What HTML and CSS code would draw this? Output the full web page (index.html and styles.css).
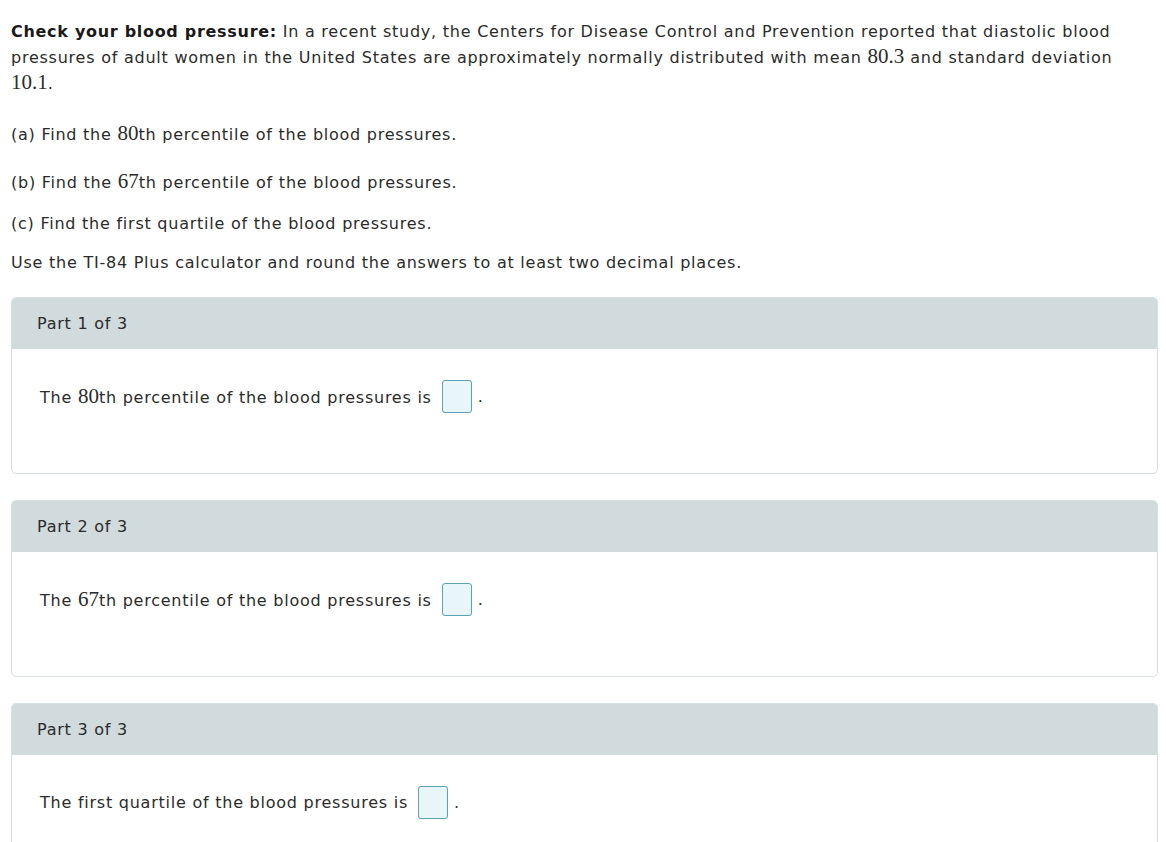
FILE: index.html
```html
<!DOCTYPE html>
<html>
<head>
<meta charset="utf-8">
<link rel="stylesheet" href="styles.css">
</head>
<body>
<div class="page">
  <p class="intro"><b>Check your blood pressure:</b> In a recent study, the Centers for Disease Control and Prevention reported that diastolic blood pressures of adult women in the United States are approximately normally distributed with mean <span class="m">80.3</span> and standard deviation <span class="m">10.1</span>.</p>
  <p class="q mline qa">(a) Find the <span class="m">80</span>th percentile of the blood pressures.</p>
  <p class="q mline">(b) Find the <span class="m">67</span>th percentile of the blood pressures.</p>
  <p class="q">(c) Find the first quartile of the blood pressures.</p>
  <p class="q">Use the TI-84 Plus calculator and round the answers to at least two decimal places.</p>

  <div class="panel">
    <div class="panel-head">Part 1 of 3</div>
    <div class="panel-body">
      <span>The <span class="m">80</span>th percentile of the blood pressures is</span><span class="box"></span><span>.</span>
    </div>
  </div>
  <div class="panel">
    <div class="panel-head">Part 2 of 3</div>
    <div class="panel-body">
      <span>The <span class="m">67</span>th percentile of the blood pressures is</span><span class="box"></span><span>.</span>
    </div>
  </div>
  <div class="panel">
    <div class="panel-head">Part 3 of 3</div>
    <div class="panel-body">
      <span>The first quartile of the blood pressures is</span><span class="box"></span><span>.</span>
    </div>
  </div>
</div>
</body>
</html>
```
FILE: styles.css
```css
html, body {
  margin: 0;
  padding: 0;
  background: #fff;
}
.page {
  padding: 19px 8px 0 11px;
  font-family: "DejaVu Sans", Verdana, sans-serif;
  font-size: 16px;
  letter-spacing: 0.76px;
  color: #2b2b2b;
}
p {
  margin: 0;
}
.intro {
  line-height: 26px;
  padding-right: 36px;
}
.intro b {
  color: #1a1a1a;
  letter-spacing: 0.7px;
}
.m {
  font-family: "Liberation Serif", "Times New Roman", serif;
  font-size: 21px;
  line-height: 1;
  letter-spacing: 0;
}
.q {
  line-height: 26px;
  margin-top: 13px;
}
.qa {
  margin-top: 18px;
}
.mline {
  padding-top: 7px;
  padding-bottom: 2px;
}
.panel {
  margin-top: 21px;
  border: 1px solid #d6dfe2;
  border-radius: 5px;
  overflow: hidden;
}
.panel + .panel {
  margin-top: 26px;
}
.panel-head {
  background: #d1dadd;
  height: 51px;
  padding-left: 25px;
  display: flex;
  align-items: center;
}
.panel-body {
  padding: 31px 0 60px 28px;
  display: flex;
  align-items: center;
  height: 33px;
}
.box {
  display: inline-block;
  width: 28px;
  height: 31px;
  border: 1px solid #5aa3b7;
  border-radius: 3px;
  background: #e8f5f9;
  margin: 0 6px 0 10px;
}
```
